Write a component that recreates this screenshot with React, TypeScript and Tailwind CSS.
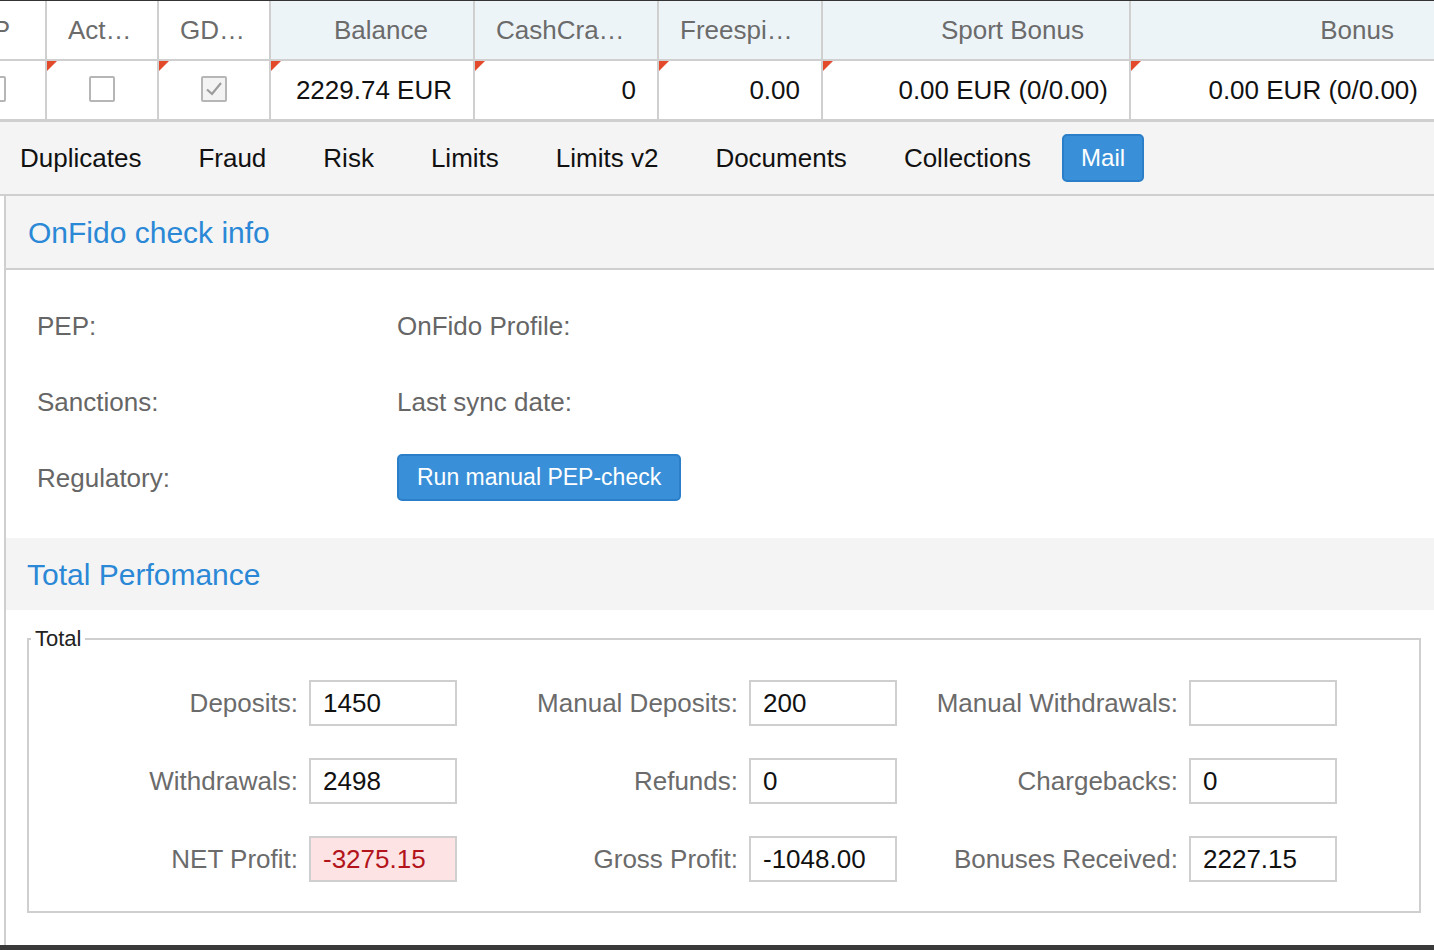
import React from "react";

const heads = [
  { label: "P", cls: "w-[106px] -ml-[59px] justify-end pr-[35px] bg-white" },
  { label: "Act…", cls: "w-[112px] pl-[21px] bg-white" },
  { label: "GD…", cls: "w-[112px] pl-[21px] bg-white" },
  { label: "Balance", cls: "w-[204px] justify-end pr-[45px] bg-[#edf4f8]" },
  { label: "CashCra…", cls: "w-[184px] pl-[21px] bg-[#edf4f8]" },
  { label: "Freespi…", cls: "w-[164px] pl-[21px] bg-[#edf4f8]" },
  { label: "Sport Bonus", cls: "w-[308px] justify-end pr-[45px] bg-[#edf4f8]" },
  { label: "Bonus", cls: "w-[310px] justify-end pr-[45px] bg-[#edf4f8]" },
];

const Flag = () => (
  <span className="absolute top-0 left-0 w-0 h-0 border-t-[10px] border-t-[#e34a2c] border-r-[10px] border-r-transparent" />
);

const Check = ({ checked }: { checked?: boolean }) => (
  <span
    className={`flex items-center justify-center w-[26px] h-[26px] -mt-[2px] border-2 border-[#b6b6b6] rounded-[2px] ${
      checked ? "bg-[#f3f3f3]" : "bg-white"
    }`}
  >
    {checked && (
      <svg width="20" height="20" viewBox="0 0 20 20" fill="none">
        <path d="M3 10.5 L8 15 L17 4" stroke="#9c9c9c" strokeWidth="2.2" />
      </svg>
    )}
  </span>
);

const tabs = ["Duplicates", "Fraud", "Risk", "Limits", "Limits v2", "Documents", "Collections"];

const fields = [
  { label: "Deposits:", value: "1450" },
  { label: "Manual Deposits:", value: "200" },
  { label: "Manual Withdrawals:", value: "" },
  { label: "Withdrawals:", value: "2498" },
  { label: "Refunds:", value: "0" },
  { label: "Chargebacks:", value: "0" },
  { label: "NET Profit:", value: "-3275.15", bad: true },
  { label: "Gross Profit:", value: "-1048.00" },
  { label: "Bonuses Received:", value: "2227.15" },
];

export default function App() {
  return (
    <div className="w-[1434px] h-[950px] overflow-hidden bg-white font-[Liberation_Sans,Arial,sans-serif] text-[26px] text-[#111] flex flex-col">
      {/* grid header + row */}
      <div className="border-t border-[#333] overflow-hidden shrink-0">
        <div className="flex h-[60px] border-b-2 border-[#cfcfcf] text-[#6b6b6b]">
          {heads.map((h, i) => (
            <div
              key={i}
              className={`flex items-center shrink-0 whitespace-nowrap border-r-2 border-[#cfcfcf] ${h.cls}`}
            >
              {h.label}
            </div>
          ))}
        </div>
        <div className="flex h-[61px] border-b-[3px] border-[#cfcfcf]">
          <div className="w-[106px] -ml-[59px] shrink-0 flex items-center justify-center border-r-2 border-[#cfcfcf]">
            <Check />
          </div>
          <div className="relative w-[112px] shrink-0 flex items-center justify-center border-r-2 border-[#cfcfcf]">
            <Flag />
            <Check />
          </div>
          <div className="relative w-[112px] shrink-0 flex items-center justify-center border-r-2 border-[#cfcfcf]">
            <Flag />
            <Check checked />
          </div>
          <div className="relative w-[204px] shrink-0 flex items-center justify-end pr-[21px] border-r-2 border-[#cfcfcf]">
            <Flag />
            2229.74 EUR
          </div>
          <div className="relative w-[184px] shrink-0 flex items-center justify-end pr-[21px] border-r-2 border-[#cfcfcf]">
            <Flag />0
          </div>
          <div className="relative w-[164px] shrink-0 flex items-center justify-end pr-[21px] border-r-2 border-[#cfcfcf]">
            <Flag />
            0.00
          </div>
          <div className="relative w-[308px] shrink-0 flex items-center justify-end pr-[21px] border-r-2 border-[#cfcfcf]">
            <Flag />
            0.00 EUR (0/0.00)
          </div>
          <div className="relative w-[310px] shrink-0 flex items-center justify-end pr-[21px] border-r-2 border-[#cfcfcf]">
            <Flag />
            0.00 EUR (0/0.00)
          </div>
        </div>
      </div>

      {/* tabs */}
      <div className="flex items-center h-[74px] shrink-0 bg-[#f4f4f4] border-b-2 border-[#cfcfcf] pl-[2px] gap-[21px]">
        {tabs.map((t) => (
          <span key={t} className="px-[18px] whitespace-nowrap">
            {t}
          </span>
        ))}
        <span className="-ml-[8px] h-[48px] flex items-center px-[17px] text-[24px] text-white bg-[#3990d8] border-2 border-[#2a7fc8] rounded-[5px]">
          Mail
        </span>
      </div>

      {/* panel */}
      <div className="ml-[4px] border-l-2 border-[#cfcfcf] flex-1 flex flex-col">
        <div className="h-[74px] shrink-0 flex items-center bg-[#f4f4f4] border-b-2 border-[#cfcfcf] pl-[22px] text-[30px] text-[#2a88d6]">
          OnFido check info
        </div>
        <div className="grid grid-cols-[360px_1fr] gap-y-[30px] pt-[33px] pb-[37px] pl-[31px] text-[#666]">
          <div className="h-[46px] flex items-center">PEP:</div>
          <div className="h-[46px] flex items-center">OnFido Profile:</div>
          <div className="h-[46px] flex items-center">Sanctions:</div>
          <div className="h-[46px] flex items-center">Last sync date:</div>
          <div className="h-[46px] flex items-center">Regulatory:</div>
          <div className="h-[46px] flex items-center">
            <button className="h-[47px] -mt-[2px] px-[18px] text-[23px] text-white bg-[#3990d8] border-2 border-[#2a7fc8] rounded-[5px]">
              Run manual PEP-check
            </button>
          </div>
        </div>

        <div className="h-[72px] shrink-0 flex items-center bg-[#f4f4f4] pl-[21px] text-[30px] text-[#2a88d6]">
          Total Perfomance
        </div>

        <div className="pt-[16px] pl-[21px] pr-[13px] pb-[32px]">
          <fieldset className="border-2 border-[#cfcfcf] pt-[28px] pb-[29px]">
            <legend className="ml-[2px] px-[4px] text-[22px] leading-[26px] text-[#222]">Total</legend>
            <div className="grid grid-cols-[419px_419px_419px] gap-x-[21px] gap-y-[32px] pl-[9px]">
              {fields.map((f) => (
                <div key={f.label} className="flex items-center justify-end gap-[11px]">
                  <span className="text-[#6b6b6b] whitespace-nowrap">{f.label}</span>
                  <div
                    className={`w-[148px] h-[46px] shrink-0 flex items-center pl-[12px] border-2 border-[#cfcfcf] ${
                      f.bad ? "bg-[#fde3e3] text-[#b3141b]" : "bg-white text-[#111]"
                    }`}
                  >
                    {f.value}
                  </div>
                </div>
              ))}
            </div>
          </fieldset>
        </div>
      </div>
      <div className="h-[5px] shrink-0 bg-[#3a3a3a]" />
    </div>
  );
}
